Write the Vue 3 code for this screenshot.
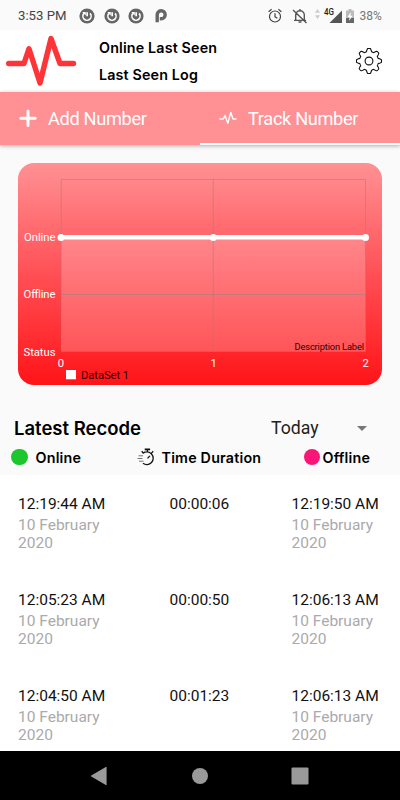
<script setup>

import {ref} from "vue";

const selected = ref("track")

const records = ref([
  {start: "12:19:44 AM", duration: "00:00:06", end: "12:19:50 AM", date: "10 February 2020"},
  {start: "12:05:23 AM", duration: "00:00:50", end: "12:06:13 AM", date: "10 February 2020"},
  {start: "12:04:50 AM", duration: "00:01:23", end: "12:06:13 AM", date: "10 February 2020"}
])

// outline of the settings gear, eight rounded teeth
function gearPath() {
  const points = []
  for (let i = 0; i < 240; i++) {
    const angle = i * Math.PI / 120
    const wave = Math.max(-1, Math.min(1, Math.cos(angle * 8) * 1.6))
    const r = 11 + 1.5 * wave
    points.push((14 + r * Math.cos(angle)).toFixed(2) + " " + (14 + r * Math.sin(angle)).toFixed(2))
  }
  return "M" + points.join("L") + "Z"
}

</script>

<template>
  <div class="screen">
    <div class="status">
      <span class="clock">3:53 PM</span>
      <svg v-for="n in 3" :key="n" class="sync" viewBox="0 0 16 16">
        <circle cx="8" cy="8" r="7.6" fill="#666"/>
        <path d="M5 5.4A4.1 4.1 0 1 0 11 5.4" fill="none" stroke="#fff" stroke-width="1.6"/>
        <path d="M3.2 4h3.6v3.6zM7.3 4.3h1.7v4H7.3z" fill="#fff"/>
      </svg>
      <svg class="parking" viewBox="0 0 12 14">
        <path d="M2.2 13.2V6.1a4 4 0 1 1 4 3.7H4.8" fill="none" stroke="#666" stroke-width="3.4"/>
      </svg>
      <span class="space"></span>
      <svg class="alarm" viewBox="0 0 14 16">
        <circle cx="7" cy="8.5" r="5.5" fill="none" stroke="#444" stroke-width="1.2"/>
        <path d="M7 5.3v3.5l2.4 1.5M.6 3.8l3-2.5M13.4 3.8l-3-2.5" fill="none" stroke="#444" stroke-width="1.2"/>
      </svg>
      <svg class="bell" viewBox="0 0 16 16">
        <path d="M3.7 12V7a4.3 4.3 0 0 1 8.6 0v5M2 12.4h12M6.5 14h3M8 1v2M1 2l13.5 13" fill="none" stroke="#555" stroke-width="1.4"/>
      </svg>
      <svg class="traffic" viewBox="0 0 5 12">
        <path d="M0 4.7L2.5 1 5 4.7zM0 7.3L2.5 11 5 7.3z" fill="#ccc"/>
      </svg>
      <svg class="signal" viewBox="0 0 19 17">
        <path d="M18 3.5V16H5.5z" fill="#555"/>
        <text x="0" y="8" textLength="10" lengthAdjust="spacingAndGlyphs" font-size="9" font-weight="500" fill="#222">4G</text>
      </svg>
      <svg class="battery" viewBox="0 0 8 14">
        <path d="M2.5 0h3v1.5H8V14H0V1.5h2.5z" fill="#bbb"/>
        <path d="M0 9h8v5H0z" fill="#666"/>
        <path d="M4.7 3L1.6 8.2h2L3.2 12l3.3-5.3h-2z" fill="#fff"/>
      </svg>
      <span class="percent">38%</span>
    </div>

    <div class="header">
      <svg class="logo" viewBox="0 0 72 52">
        <path d="M3.7 29.5H19L24 14.7 35 49 46 4.5 55 29.5H68.5" fill="none" stroke="#ff3438" stroke-width="5.4" stroke-linejoin="round" stroke-linecap="round"/>
      </svg>
      <div class="titles">
        <div class="title-seen">Online Last Seen</div>
        <div class="title-log">Last Seen Log</div>
      </div>
      <svg class="gear" viewBox="0 0 28 28">
        <path :d="gearPath()" fill="none" stroke="#111" stroke-width="1.1"/>
        <circle cx="14" cy="14" r="3.9" fill="none" stroke="#111" stroke-width="1.1"/>
      </svg>
    </div>

    <div class="tabs">
      <div class="tab" :class="{active: selected === 'add'}" @click="selected = 'add'">
        <svg viewBox="0 0 18 18">
          <path d="M9 2v14.4M1.8 9.2h14.4" stroke="#fff" stroke-width="3" stroke-linecap="round"/>
        </svg>
        <span>Add Number</span>
      </div>
      <div class="tab" :class="{active: selected === 'track'}" @click="selected = 'track'">
        <svg viewBox="0 0 18 18">
          <path d="M1 10h3.3l1.8-3.6 2.7 8 3-11 2.2 6.6h3" fill="none" stroke="#fff" stroke-width="1.4" stroke-linejoin="round" stroke-linecap="round"/>
        </svg>
        <span>Track Number</span>
      </div>
    </div>

    <div class="card">
      <svg class="chart" viewBox="18 163.5 364 222">
        <path d="M61 237.3H365.5V352H61z" fill="#fff" fill-opacity=".22"/>
        <path d="M61.3 180H365.5V352H61.3zM213.3 180V352M61 295H365.5" fill="none" stroke="#888" stroke-opacity=".5"/>
        <path d="M61 237.8H365.5" stroke="#fff" stroke-width="4.4"/>
        <circle cx="61" cy="238" r="3.5" fill="#fff"/>
        <circle cx="213.3" cy="238" r="3.5" fill="#fff"/>
        <circle cx="365.5" cy="238" r="3.5" fill="#fff"/>
        <g fill="#fff" font-size="11.3">
          <text x="24" y="241.3" textLength="31.5">Online</text>
          <text x="23.5" y="298.5" textLength="32">Offline</text>
          <text x="23.5" y="356" textLength="32">Status</text>
          <text x="61" y="367.3" text-anchor="middle">0</text>
          <text x="213.7" y="367.3" text-anchor="middle">1</text>
          <text x="365.7" y="367.3" text-anchor="middle">2</text>
        </g>
        <path d="M66 370.5h10v9.3H66z" fill="#fff"/>
        <text x="81" y="379.5" font-size="11.3" textLength="48" fill="#300">DataSet 1</text>
        <text x="294.5" y="350.5" font-size="9.3" textLength="69.5" fill="#300">Description Label</text>
      </svg>
    </div>

    <div class="latest">
      <span class="latest-title">Latest Recode</span>
      <span class="period">Today</span>
      <span class="arrow"></span>
    </div>
    <div class="legend">
      <span class="dot green"></span>
      <span class="lbl-online">Online</span>
      <svg class="timer" viewBox="0 0 18 18">
        <path d="M6 5.3A6.3 6.3 0 1 1 6 15.2M10.4 1.5v2.4M4.7 3.2l1.8 2M16.2 3.2l-1.7 1.9M10.5 10.4l2.4-2.5" fill="none" stroke="#111" stroke-width="1.3"/>
        <path d="M7.7 1.4h5.4" stroke="#111" stroke-width="1.8"/>
        <path d="M1.5 7.8h4.5M.5 10.5h5M2 13.2h4.5" stroke="#666" stroke-width=".9"/>
      </svg>
      <span class="lbl-time">Time Duration</span>
      <span class="dot pink"></span>
      <span class="lbl-offline">Offline</span>
    </div>

    <div class="records">
      <div v-for="record in records" :key="record.start" class="record">
        <div class="online-at">
          <div class="time">{{ record.start }}</div>
          <div class="date">{{ record.date }}</div>
        </div>
        <div class="duration">{{ record.duration }}</div>
        <div class="offline-at">
          <div class="time">{{ record.end }}</div>
          <div class="date">{{ record.date }}</div>
        </div>
      </div>
    </div>

    <div class="navbar">
      <svg viewBox="0 0 20 20"><path d="M16.6 1.3v17.4q0 .8-.8.4L1.3 10.6q-.7-.6 0-1.2L15.8.9q.8-.3.8.4z" fill="#999"/></svg>
      <svg viewBox="0 0 20 20"><circle cx="10" cy="10" r="8" fill="#999"/></svg>
      <svg viewBox="0 0 20 20"><rect x="1.5" y="1.5" width="17" height="17" rx="1" fill="#999"/></svg>
    </div>
  </div>
</template>

<style>
body {
  margin: 0;
}
</style>

<style scoped>
.screen {
  display: flex;
  flex-direction: column;
  width: 400px;
  height: 800px;
  overflow: hidden;
  background: #fafafa;
  font-family: Roboto, sans-serif;
  color: #111;
  white-space: nowrap;
}

svg, span {
  flex: none;
}

.status {
  display: flex;
  align-items: center;
  height: 30px;
  box-sizing: border-box;
  padding: 1px 18px 0;
  font-size: 13.2px;
  color: #444;
}

.clock {
  width: 61px;
}

.sync {
  width: 16px;
  height: 16px;
  margin-right: 8.5px;
}

.parking {
  width: 12px;
  height: 14px;
  margin-left: 2px;
}

.status .space {
  flex: 1;
}

.alarm {
  width: 14px;
  height: 16px;
  margin-right: 10px;
}

.bell {
  width: 16px;
  height: 16px;
  margin-right: 7px;
}

.traffic {
  width: 5px;
  height: 12px;
  margin: 0 3.5px 3px 0;
}

.signal {
  width: 19px;
  height: 17px;
  margin: 0 3px 1px 0;
  overflow: visible;
}

.battery {
  width: 8px;
  height: 14px;
  margin-right: 6px;
}

.percent {
  width: 22.5px;
  font-size: 12px;
  color: #777;
}

.header {
  display: flex;
  height: 62px;
  background: #fff;
}

.logo {
  width: 72px;
  height: 52px;
  margin: 4px 0 0 5px;
}

.titles {
  flex: 1;
  padding: 8px 0 0 22px;
  font: 600 14.3px/20px Inter, sans-serif;
  letter-spacing: .15px;
  color: #000;
}

.title-log {
  margin-top: 7px;
}

.gear {
  width: 28px;
  height: 28px;
  margin: 17px 17px 0 0;
}

.tabs {
  display: flex;
  height: 53px;
  background: #ff9194;
  box-shadow: 0 1px 4px rgba(0, 0, 0, .3);
}

.tab {
  display: flex;
  width: 200px;
  box-sizing: border-box;
  align-items: center;
  padding-left: 19px;
  border-bottom: 2px solid transparent;
  font-size: 18.2px;
  letter-spacing: -.33px;
  color: #fff;
}

.tab.active {
  border-bottom-color: #fff;
}

.tab svg {
  width: 18px;
  height: 18px;
  margin-right: 11px;
}

.tab span {
  margin-top: 1px;
}

.card {
  height: 222px;
  margin: 18px 18px 0;
  border-radius: 16px;
  background: linear-gradient(#ff9194, #ff5055 50%, #ff1418);
}

.chart {
  display: block;
  width: 364px;
  height: 222px;
}

.latest {
  display: flex;
  align-items: center;
  height: 30px;
  margin-top: 28px;
  padding-left: 14px;
}

.latest-title {
  width: 257px;
  font: 600 18.5px Inter, sans-serif;
  color: #000;
}

.period {
  width: 86px;
  font-size: 17.7px;
  color: #222;
}

.arrow {
  border: 5.5px solid transparent;
  border-top-color: #777;
  border-bottom: 0;
}

.legend {
  display: flex;
  align-items: center;
  height: 32px;
  box-sizing: border-box;
  padding: 0 0 4px 11px;
  font: 600 14.3px Inter, sans-serif;
  letter-spacing: .2px;
  color: #000;
}

.dot {
  width: 16.5px;
  height: 16.5px;
  border-radius: 50%;
}

.green {
  background: #1cc62c;
}

.pink {
  background: #fa1676;
}

.lbl-online {
  width: 101px;
  margin-left: 8px;
}

.timer {
  width: 18px;
  height: 18px;
}

.lbl-time {
  width: 142px;
  margin-left: 7px;
}

.lbl-offline {
  margin-left: 2.5px;
}

.records {
  height: 276px;
  background: #fff;
  overflow: hidden;
}

.record {
  display: grid;
  grid-template-columns: 151.5px 122px 100px;
  height: 96px;
  box-sizing: border-box;
  padding: 19px 0 0 18px;
  font-size: 15.5px;
  line-height: 20px;
}

.date {
  width: 92px;
  margin-top: 2px;
  line-height: 18px;
  color: #aaa;
  white-space: normal;
}

.navbar {
  display: flex;
  flex: 1;
  align-items: center;
  justify-content: center;
  gap: 80px;
  background: #000;
}

.navbar svg {
  width: 20px;
  height: 20px;
}
</style>
